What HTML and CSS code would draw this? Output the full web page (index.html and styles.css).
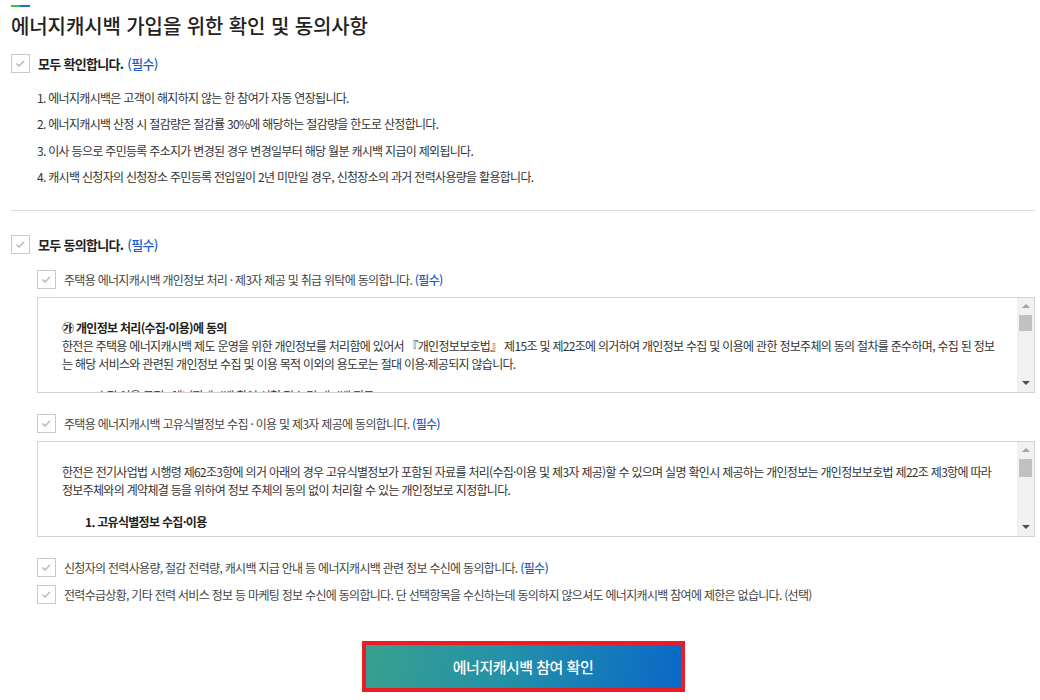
FILE: index.html
```html
<!DOCTYPE html>
<html lang="ko">
<head>
<meta charset="utf-8">
<title>에너지캐시백 가입을 위한 확인 및 동의사항</title>
<link rel="stylesheet" href="styles.css">
</head>
<body>
<div class="page">
  <div class="title-mark"><span class="mark-green"></span><span class="mark-blue"></span></div>
  <h1 class="title">에너지캐시백 가입을 위한 확인 및 동의사항</h1>

  <label class="check-row main">
    <span class="cbox"><svg width="19" height="19" viewBox="0 0 19 19"><rect x="0.5" y="0.5" width="18" height="18" fill="#fff" stroke="#c9c9c9"/><polyline points="5.5,9.5 8,12 13,7" fill="none" stroke="#b5b5b5" stroke-width="1.4"/></svg></span>
    <span class="label-strong">모두 확인합니다.</span> <span class="req">(필수)</span>
  </label>

  <ol class="notice-list">
    <li>1. 에너지캐시백은 고객이 해지하지 않는 한 참여가 자동 연장됩니다.</li>
    <li>2. 에너지캐시백 산정 시 절감량은 절감률 30%에 해당하는 절감량을 한도로 산정합니다.</li>
    <li>3. 이사 등으로 주민등록 주소지가 변경된 경우 변경일부터 해당 월분 캐시백 지급이 제외됩니다.</li>
    <li>4. 캐시백 신청자의 신청장소 주민등록 전입일이 2년 미만일 경우, 신청장소의 과거 전력사용량을 활용합니다.</li>
  </ol>

  <hr class="divider">

  <label class="check-row main second">
    <span class="cbox"><svg width="19" height="19" viewBox="0 0 19 19"><rect x="0.5" y="0.5" width="18" height="18" fill="#fff" stroke="#c9c9c9"/><polyline points="5.5,9.5 8,12 13,7" fill="none" stroke="#b5b5b5" stroke-width="1.4"/></svg></span>
    <span class="label-strong">모두 동의합니다.</span> <span class="req">(필수)</span>
  </label>

  <div class="sub">
    <label class="check-row item first">
      <span class="cbox"><svg width="19" height="19" viewBox="0 0 19 19"><rect x="0.5" y="0.5" width="18" height="18" fill="#fff" stroke="#c9c9c9"/><polyline points="5.5,9.5 8,12 13,7" fill="none" stroke="#b5b5b5" stroke-width="1.4"/></svg></span>
      <span class="label">주택용 에너지캐시백 개인정보 처리 · 제3자 제공 및 취급 위탁에 동의합니다. <span class="req">(필수)</span></span>
    </label>
    <div class="terms">
      <div class="terms-body">
        <p class="terms-head">㉮ 개인정보 처리(수집·이용)에 동의</p>
        <p>한전은 주택용 에너지캐시백 제도 운영을 위한 개인정보를 처리함에 있어서 『개인정보보호법』 제15조 및 제22조에 의거하여 개인정보 수집 및 이용에 관한 정보주체의 동의 절차를 준수하며, 수집 된 정보<br>는 해당 서비스와 관련된 개인정보 수집 및 이용 목적 이외의 용도로는 절대 이용·제공되지 않습니다.</p>
        <p class="terms-sub">1. 수집·이용 목적 : 에너지캐시백 참여 신청 접수 및 캐시백 지급</p>
      </div>
      <div class="scrollbar" aria-hidden="true">
        <span class="sb-btn"><svg width="8" height="4" viewBox="0 0 8 4"><polygon points="4,0 8,4 0,4" fill="#a3a3a3"/></svg></span>
        <span class="sb-track"><span class="sb-thumb"></span></span>
        <span class="sb-btn"><svg width="8" height="4" viewBox="0 0 8 4"><polygon points="0,0 8,0 4,4" fill="#505050"/></svg></span>
      </div>
    </div>

    <label class="check-row item">
      <span class="cbox"><svg width="19" height="19" viewBox="0 0 19 19"><rect x="0.5" y="0.5" width="18" height="18" fill="#fff" stroke="#c9c9c9"/><polyline points="5.5,9.5 8,12 13,7" fill="none" stroke="#b5b5b5" stroke-width="1.4"/></svg></span>
      <span class="label">주택용 에너지캐시백 고유식별정보 수집 · 이용 및 제3자 제공에 동의합니다. <span class="req">(필수)</span></span>
    </label>
    <div class="terms">
      <div class="terms-body">
        <p>한전은 전기사업법 시행령 제62조3항에 의거 아래의 경우 고유식별정보가 포함된 자료를 처리(수집·이용 및 제3자 제공)할 수 있으며 실명 확인시 제공하는 개인정보는 개인정보보호법 제22조 제3항에 따라<br>정보주체와의 계약체결 등을 위하여 정보 주체의 동의 없이 처리할 수 있는 개인정보로 지정합니다.</p>
        <p class="terms-sub strong">1. 고유식별정보 수집·이용</p>
      </div>
      <div class="scrollbar" aria-hidden="true">
        <span class="sb-btn"><svg width="8" height="4" viewBox="0 0 8 4"><polygon points="4,0 8,4 0,4" fill="#a3a3a3"/></svg></span>
        <span class="sb-track"><span class="sb-thumb thumb-2"></span></span>
        <span class="sb-btn"><svg width="8" height="4" viewBox="0 0 8 4"><polygon points="0,0 8,0 4,4" fill="#505050"/></svg></span>
      </div>
    </div>

    <label class="check-row item third">
      <span class="cbox"><svg width="19" height="19" viewBox="0 0 19 19"><rect x="0.5" y="0.5" width="18" height="18" fill="#fff" stroke="#c9c9c9"/><polyline points="5.5,9.5 8,12 13,7" fill="none" stroke="#b5b5b5" stroke-width="1.4"/></svg></span>
      <span class="label">신청자의 전력사용량, 절감 전력량, 캐시백 지급 안내 등 에너지캐시백 관련 정보 수신에 동의합니다. <span class="req">(필수)</span></span>
    </label>
    <label class="check-row item last">
      <span class="cbox"><svg width="19" height="19" viewBox="0 0 19 19"><rect x="0.5" y="0.5" width="18" height="18" fill="#fff" stroke="#c9c9c9"/><polyline points="5.5,9.5 8,12 13,7" fill="none" stroke="#b5b5b5" stroke-width="1.4"/></svg></span>
      <span class="label">전력수급상황, 기타 전력 서비스 정보 등 마케팅 정보 수신에 동의합니다. 단 선택항목을 수신하는데 동의하지 않으셔도 에너지캐시백 참여에 제한은 없습니다. (선택)</span>
    </label>
  </div>

  <div class="btn-area">
    <button type="button" class="btn-submit">에너지캐시백 참여 확인</button>
  </div>
</div>
</body>
</html>
```

FILE: styles.css
```css
* { box-sizing: border-box; }
html, body { margin: 0; padding: 0; background: #fff; }
body {
  font-family: "Noto Sans CJK KR", "Noto Sans", sans-serif;
  color: #333;
  font-size: 12px;
}
.page {
  padding: 5px 5px 0 11px;
}
.title-mark {
  display: flex;
  height: 2px;
}
.mark-green { width: 9px; background: #3dbb3a; }
.mark-blue { width: 10px; background: #1a73d4; }
.title {
  margin: 5px 0 0;
  font-size: 20px;
  line-height: 28px;
  font-weight: 500;
  color: #222;
  letter-spacing: -0.1px;
}
.check-row {
  display: flex;
  align-items: center;
  height: 19px;
  cursor: pointer;
}
.check-row.main { margin-top: 14px; }
.check-row.main.second { margin-top: 24px; }
.cbox {
  display: flex;
  width: 19px;
  height: 19px;
  flex: none;
}
.cbox svg { display: block; }
.label-strong {
  margin-left: 8px;
  font-size: 13px;
  font-weight: 700;
  color: #222;
  letter-spacing: -0.7px;
}
.req {
  color: #1a5fc9;
  margin-left: 4px;
  font-weight: 500;
  letter-spacing: -0.7px;
}
.check-row.main .req { font-size: 13px; }
.notice-list {
  list-style: none;
  margin: 16px 0 0;
  padding: 0 0 0 26px;
  display: flex;
  flex-direction: column;
  gap: 8.3px;
}
.notice-list li {
  line-height: 18px;
  font-size: 12px;
  color: #333;
  letter-spacing: -0.7px;
}
.divider {
  margin: 24px 0 0;
  border: 0;
  border-top: 1px solid #dcdcdc;
  height: 0;
}
.sub {
  padding-left: 26px;
}
.check-row.item { margin-top: 21px; }
.check-row.item.first { margin-top: 16px; }
.check-row.item.last { margin-top: 8px; }
.label {
  margin-left: 8px;
  color: #444;
  font-size: 12px;
  letter-spacing: -0.7px;
}
.label .req { margin-left: 0; font-size: 12px; }
.terms {
  margin-top: 8px;
  height: 96px;
  border: 1px solid #d3d3d3;
  display: flex;
}
.terms-body {
  flex: 1;
  min-width: 0;
  overflow: hidden;
  padding: 21px 10px 0 24px;
  font-size: 12px;
  line-height: 18px;
  color: #333;
  letter-spacing: -0.7px;
}
.terms-body p { margin: 0; }
.terms-head { font-weight: 700; color: #222; }
.terms-sub { margin-top: 14px !important; padding-left: 23px; }
.terms-sub.strong { font-weight: 700; color: #222; }
.scrollbar {
  width: 17px;
  flex: none;
  display: flex;
  flex-direction: column;
  background: #f1f1f1;
}
.sb-btn {
  height: 17px;
  flex: none;
  display: flex;
  align-items: center;
  justify-content: center;
}
.sb-btn svg { display: block; }
.sb-track {
  flex: 1;
  display: flex;
  flex-direction: column;
  padding: 0 2px;
}
.sb-thumb {
  height: 16px;
  background: #c1c1c1;
}
.sb-thumb.thumb-2 { height: 18px; }
.btn-area {
  display: flex;
  justify-content: center;
  margin-top: 37px;
}
.btn-submit {
  width: 323px;
  height: 51px;
  border: 4px solid #ea1c24;
  background: linear-gradient(100deg, #38a08f 0%, #2391a8 45%, #0a68c8 100%);
  color: #fff;
  font-family: "Noto Sans CJK KR", "Noto Sans", sans-serif;
  font-size: 15px;
  font-weight: 500;
  letter-spacing: -0.5px;
  cursor: pointer;
  padding: 0;
}
```
